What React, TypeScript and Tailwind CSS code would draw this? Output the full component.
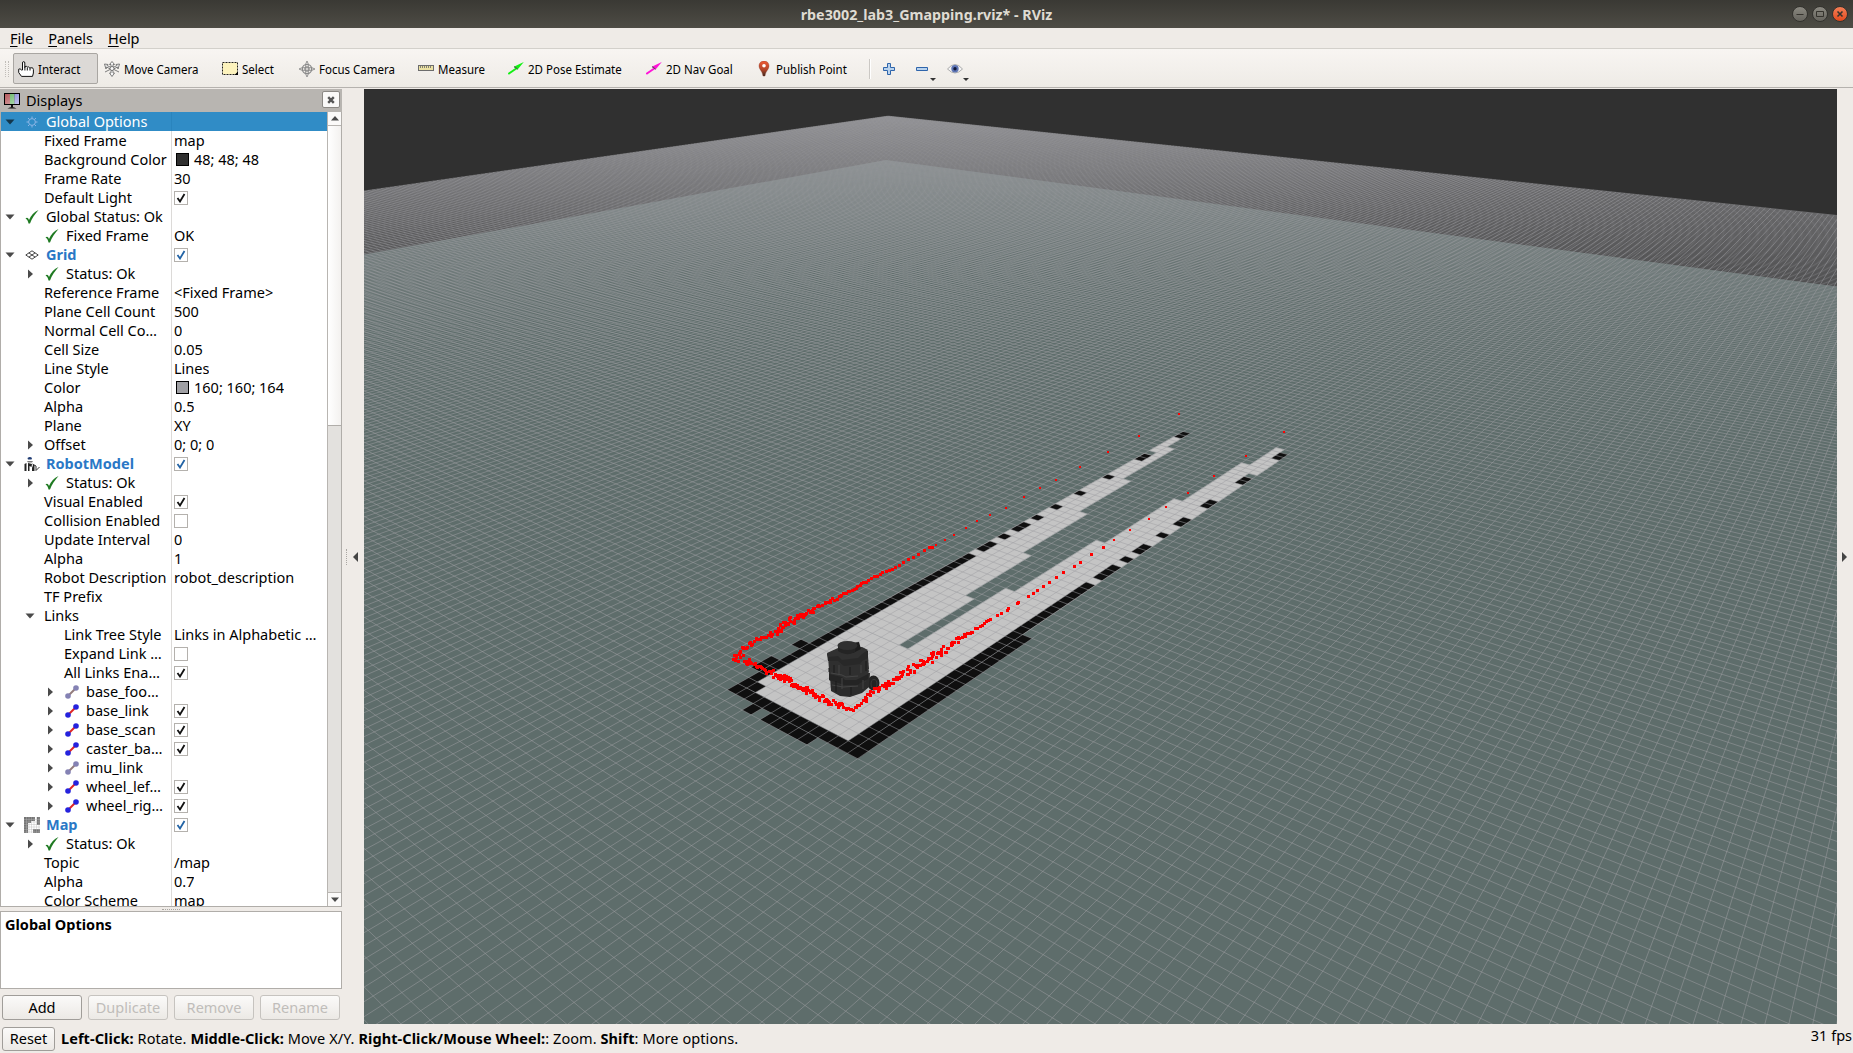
import React from "react";

/* ---------- 3D scene: ground plane projected through an orbit camera ---------- */

const FOCAL = 1128.6;
const CX = 1100.5;
const CY = 556.5;
const HORIZON = -46.67165;
const YAW = 0.62668;
const SCALE = 2.76114;
const OFF_U = 2.96538;
const OFF_V = 3.14757;
const FP = Math.hypot(FOCAL, CY - HORIZON);
const COS = Math.cos(YAW);
const SIN = Math.sin(YAW);
const NEAR = 2.6;

const depth = (u: number, v: number) => (u + OFF_U) * COS + (v + OFF_V) * SIN;

function project(u: number, v: number): [number, number] {
  const f = depth(u, v);
  const l = (u + OFF_U) * SIN - (v + OFF_V) * COS;
  return [CX + (l * FP) / f, HORIZON + (SCALE * FP) / f];
}

type P2 = [number, number];

function clipNear(poly: P2[]): P2[] {
  const out: P2[] = [];
  poly.forEach((a, i) => {
    const b = poly[(i + 1) % poly.length];
    const da = depth(a[0], a[1]) - NEAR;
    const db = depth(b[0], b[1]) - NEAR;
    if (da >= 0) out.push(a);
    if (da * db < 0) {
      const t = da / (da - db);
      out.push([a[0] + (b[0] - a[0]) * t, a[1] + (b[1] - a[1]) * t]);
    }
  });
  return out;
}

const pts = (poly: P2[]) =>
  clipNear(poly)
    .map(([u, v]) => project(u, v).map((n) => n.toFixed(2)).join(","))
    .join(" ");

/* rectangle given in 5 cm cell indices */
const cells = ([u0, u1, v0, v1]: number[]) =>
  pts([
    [u0 / 20, v0 / 20],
    [u1 / 20, v0 / 20],
    [u1 / 20, v1 / 20],
    [u0 / 20, v1 / 20],
  ]);

const FREE = [
  [3, 14, 4, 15],
  [14, 26, 3, 9],
  [26, 38, 3, 8],
  [38, 50, 3, 7],
  [50, 59, 3, 6],
  [59, 60, 4, 6],
  [60, 62, 3, 6],
  [62, 65, 3, 5],
  [65, 67, 4, 5],
  [67, 68, 4, 5],
  [14, 23, 10, 16],
  [23, 32, 11, 16],
  [32, 42, 12, 16],
  [42, 51, 13, 16],
  [51, 58, 14, 16],
  [58, 59, 14, 15],
  [59, 61, 14, 16],
  [61, 65, 15, 16],
];

const OCCUPIED = [
  [2, 21, 2, 3],
  [2, 31, 3, 4],
  [32, 35, 3, 4],
  [36, 37, 3, 4],
  [38, 40, 3, 4],
  [42, 43, 3, 4],
  [45, 47, 3, 4],
  [50, 52, 3, 4],
  [57, 59, 3, 4],
  [65, 67, 3, 4],
  [2, 3, 2, 16],
  [3, 4, 14, 16],
  [4, 29, 15, 16],
  [5, 7, 16, 17],
  [9, 10, 16, 17],
  [30, 32, 15, 16],
  [33, 34, 15, 16],
  [35, 37, 15, 16],
  [38, 39, 15, 16],
  [41, 42, 15, 16],
  [45, 46, 15, 16],
  [50, 51, 15, 16],
  [56, 58, 15, 16],
  [64, 66, 15, 16],
  [1, 2, 6, 11],
  [1, 2, 12, 13],
];

function gridLines() {
  const out: string[][] = [];
  const seg = (a: P2, b: P2) => {
    let [p, q] = [a, b];
    const dp = depth(...p) - NEAR;
    const dq = depth(...q) - NEAR;
    if (dp < 0 && dq < 0) return;
    if (dp * dq < 0) {
      const t = dp / (dp - dq);
      const m: P2 = [p[0] + (q[0] - p[0]) * t, p[1] + (q[1] - p[1]) * t];
      if (dp < 0) p = m;
      else q = m;
    }
    out.push([...project(...p), ...project(...q)].map((n) => n.toFixed(2)));
  };
  for (let i = 0; i <= 500; i++) {
    const c = -12.5 + i * 0.05;
    seg([c, -12.5], [c, 12.5]);
    seg([-12.5, c], [12.5, c]);
  }
  return out;
}

let seed = 7;
const rnd = () => {
  seed = (seed * 16807) % 2147483647;
  return seed / 2147483647;
};

/* dense parts of the laser scan: x, y, spread, spacing */
const SCAN_TRACK: number[][] = [
  [930, 548, 0.8, 6],
  [913, 557, 0.8, 5],
  [895, 567.5, 1, 3.6],
  [880, 574.5, 1.2, 3],
  [866, 582, 1.2, 2.4],
  [850, 591.5, 1.6, 2.2],
  [833, 600.5, 2, 1.8],
  [820, 606, 2.4, 1.5],
  [803, 614.5, 3.6, 0.9],
  [787, 624, 4, 0.9],
  [777, 631, 3, 1.4],
  [755, 641.5, 2.4, 1.7],
  [742, 650, 3.6, 1.3],
  [735, 656, 3.6, 1.1],
  [755, 665, 3.4, 1.3],
  [772, 673, 3.6, 1.1],
  [790, 681, 4, 0.9],
  [811, 692.5, 4, 0.9],
  [832, 703, 3.4, 1.5],
  [850, 709.5, 2.6, 1.7],
  [860, 704, 3, 1.6],
  [872, 693, 3.4, 1.4],
  [887, 686, 3, 1.4],
  [900, 676, 4, 1.2],
  [920, 665, 4.4, 1],
  [934, 656, 4, 1.1],
  [948, 647, 3, 1.5],
  [962, 637.5, 2.2, 2.2],
  [980, 627, 2, 2.6],
  [990, 618, 0.8, 3],
];

const SCAN_FAR: number[][] = [
  [1179, 414], [1139.3, 435.7], [1108, 452], [1080, 467.3], [1056.3, 480.3], [1040, 488.3],
  [1024, 496.7], [1006, 507.7], [990, 515], [977, 521], [966, 528], [954, 535],
  [945, 540], [936, 545], [932, 547], [1284, 431.7], [1246, 456], [1213.7, 476.3], [1188, 493],
  [1165.7, 507.3], [1148.7, 518.7], [1130.3, 530.3], [1114, 540], [1103, 547.3], [1091.7, 554.7],
  [1080, 562], [1074.3, 566.7], [1063.7, 572.7], [1056.7, 577.7], [1049.3, 582.3], [1043.7, 586.3],
  [1037, 590.3], [1033.7, 593], [1028, 596.7], [1018, 602], [1017, 603.5], [1008, 608], [1007.5, 610],
  [1001, 613.5], [997.5, 615.5], [990, 619],
];

function scanPoints() {
  const out: number[][] = [...SCAN_FAR];
  for (let i = 0; i + 1 < SCAN_TRACK.length; i++) {
    const [x0, y0, s, step] = SCAN_TRACK[i];
    const [x1, y1] = SCAN_TRACK[i + 1];
    const n = Math.max(1, Math.round(Math.hypot(x1 - x0, y1 - y0) / step));
    for (let k = 0; k < n; k++) {
      const t = k / n;
      const j = (rnd() + rnd() - 1) * s * 1.2;
      out.push([x0 + (x1 - x0) * t + (rnd() - 0.5) * s, y0 + (y1 - y0) * t + j]);
    }
  }
  return out;
}

const LINES = gridLines();
const SCAN = scanPoints();
const MAP_EXTENT: P2[] = [[-10, -10], [9.2, -10], [9.2, 9.2], [-10, 9.2]];

function Scene() {
  return (
    <svg viewBox="364 89 1473 935" className="block h-[935px] w-[1473px] shrink-0 bg-[#303030]">
      <polygon points={pts(MAP_EXTENT)} fill="#5e6d6b" />
      <g fill="#c4c4c4" stroke="#c4c4c4" strokeWidth="0.4">
        {FREE.map((c, i) => <polygon key={i} points={cells(c)} />)}
      </g>
      <g fill="#0f0f0f">
        {OCCUPIED.map((c, i) => <polygon key={i} points={cells(c)} />)}
      </g>
      <g stroke="#a0a0a4" strokeOpacity="0.5" strokeWidth="1">
        {LINES.map(([x1, y1, x2, y2], i) => <line key={i} x1={x1} y1={y1} x2={x2} y2={y2} />)}
      </g>
      <Robot />
      <g fill="#ff0000">
        {SCAN.map(([x, y], i) => {
          const s = y > 545 ? 3 : 2;
          return <rect key={i} x={Math.round(x - s / 2)} y={Math.round(y - s / 2)} width={s} height={s} />;
        })}
      </g>
    </svg>
  );
}

function Robot() {
  return (
    <g>
      <ellipse cx="873.5" cy="683" rx="6" ry="7.5" fill="#232323" />
      <ellipse cx="874" cy="684" rx="3" ry="4.5" fill="none" stroke="#3a3a3a" />
      <path d="M830 677 L836 673 L870 673 L869 687 L862 693 L850 697 L840 696 L831 691Z" fill="#2b2b2b" />
      <path d="M829 663 L866 663 L869 671 L866 682 L852 686 L840 685 L829 680Z" fill="#303030" />
      <path d="M829 674 L842 677 L845 680 L856 680 L868 674 L868 679 L857 685 L844 685 L829 680Z" fill="#242424" />
      <path d="M828 656 L868 656 L869 669 L862 674 L846 676 L829 670Z" fill="#2f2f2f" />
      <path d="M827 654 L835 650 L863 648 L868 651 L868 658 L862 661 L860 664 L844 666 L838 661 L828 661Z" fill="#282828" />
      <path d="M827 653 L838 648 L862 647 L868 650 L862 654 L858 658 L842 660 L838 656 L828 657Z" fill="#313131" />
      <path d="M851 643 L859 642 L861 649 L853 653Z" fill="#1d1d1d" />
      <path d="M838 645 L838 651 Q846 657 855 652 L856 645Z" fill="#242424" />
      <ellipse cx="847.500" cy="645.500" rx="10" ry="4.500" fill="#303030" />
      <path d="M839 665 V675 M842 678 V689 M861 665 V673 M863 680 V689 M831 673 L842 675 L846 677 L858 676 M832 685 L843 687 L858 686" stroke="#454545" fill="none" />
      <path d="M829 668 V672 M834 665 V673 M850 667 V675 M851 687 V695 M836 681 V692 M866 661 V671" stroke="#1a1a1a" fill="none" />
    </g>
  );
}

/* ---------- small glyphs ---------- */

function TreeArrow({ open, dark }: { open: boolean; dark?: boolean }) {
  return (
    <svg className="h-3 w-3 shrink-0" viewBox="0 0 12 12">
      <path d={open ? "M1.500 3.500H10.500L6 8.500Z" : "M4 1.500V10.500L9 6Z"} fill={dark ? "#13364c" : "#4a4a4a"} />
    </svg>
  );
}

function GreenCheck() {
  return (
    <svg className="h-[14px] w-[14px]" viewBox="0 0 14 14">
      <path d="M0.500 8.500C2 7 3 7.500 4 10C6 5.500 9 2 13.500 0C10 4 6.500 9 5 13.500H3.500C3 11 2 9 0.500 8.500Z" fill="#1f7a22" />
    </svg>
  );
}

function GearIcon() {
  return (
    <svg className="h-3 w-3" viewBox="0 0 12 12" fill="none" stroke="#8db6e6">
      <circle cx="6" cy="6" r="3.400" />
      <path d="M6 0.500V2.500M6 9.500V11.500M0.500 6H2.500M9.500 6H11.500M2 2L3.500 3.500M8.500 8.500L10 10M2 10L3.500 8.500M8.500 3.500L10 2" />
    </svg>
  );
}

function GridIcon() {
  return (
    <svg className="h-[10px] w-[14px]" viewBox="0 0 14 10" fill="none" stroke="#444" strokeWidth="1">
      <path d="M7 0.800L13.200 5L7 9.200L0.800 5ZM3.900 2.900L10.100 7.100M10.100 2.900L3.900 7.100" />
    </svg>
  );
}

function RobotIcon() {
  return (
    <svg className="h-4 w-4" viewBox="0 0 16 16">
      <path d="M3.500 2Q6 0 8 2L7.500 3.500H4Z" fill="#1f3b73" />
      <path d="M3 5H9L8 6.500H4Z" fill="#777" />
      <path d="M0.500 8L2.500 7V15H0.500ZM4 7L8 8L7.500 11L5.500 10V15H4ZM9 9L10.500 9V15H8V12Z" fill="#222" />
      <path d="M8.500 8L12 10V14.500L15.500 11" fill="none" stroke="#333" />
    </svg>
  );
}

function MapIcon() {
  return (
    <svg className="h-4 w-4" viewBox="0 0 16 16">
      <path d="M0 0H11V4H7V6H4V16H0ZM13 0H16V8H13ZM9 12H16V16H9Z" fill="#747474" />
      <path d="M2.500 0V16M5 0V16M7.500 0V16M10 0V16M12.500 0V16M15 0V16M0 2.500H16M0 5H16M0 7.500H16M0 10H16M0 12.500H16M0 15H16" stroke="#b5b5b5" strokeWidth="0.400" />
    </svg>
  );
}

function LinkIcon({ faded }: { faded?: boolean }) {
  const ball = faded ? "#8482b4" : "#2522dd";
  return (
    <svg className="h-[14px] w-[14px]" viewBox="0 0 14 14">
      <path d="M3 11L11 3" stroke={faded ? "#937c7c" : "#df2626"} strokeWidth="2" />
      <circle cx="3" cy="11" r="2.800" fill={ball} />
      <circle cx="11" cy="3" r="2.800" fill={ball} />
    </svg>
  );
}

function CheckBox({ on, blue }: { on: boolean; blue?: boolean }) {
  return (
    <span className="flex h-[14px] w-[14px] items-center justify-center border border-[#b4b1ad] bg-white">
      {on && (
        <svg className="h-[10px] w-[10px]" viewBox="0 0 10 10">
          <path d="M1.500 5L4 8.500L8.500 1" fill="none" stroke={blue ? "#2263a5" : "#111"} strokeWidth="1.800" />
        </svg>
      )}
    </span>
  );
}

/* ---------- display tree ---------- */

type Icon = "gear" | "ok" | "grid" | "robot" | "map" | "link" | "linkOff";
type Value = string | { swatch: string; text: string } | { check: boolean; blue?: boolean };
type Row = { d: number; label: string; v?: Value; arrow?: "open" | "closed"; icon?: Icon; bold?: boolean; selected?: boolean };

const on = { check: true };
const off = { check: false };
const blue = { check: true, blue: true };

const ROWS: Row[] = [
  { d: 0, label: "Global Options", arrow: "open", icon: "gear", selected: true },
  { d: 1, label: "Fixed Frame", v: "map" },
  { d: 1, label: "Background Color", v: { swatch: "#303030", text: "48; 48; 48" } },
  { d: 1, label: "Frame Rate", v: "30" },
  { d: 1, label: "Default Light", v: on },
  { d: 0, label: "Global Status: Ok", arrow: "open", icon: "ok" },
  { d: 1, label: "Fixed Frame", icon: "ok", v: "OK" },
  { d: 0, label: "Grid", arrow: "open", icon: "grid", bold: true, v: blue },
  { d: 1, label: "Status: Ok", arrow: "closed", icon: "ok" },
  { d: 1, label: "Reference Frame", v: "<Fixed Frame>" },
  { d: 1, label: "Plane Cell Count", v: "500" },
  { d: 1, label: "Normal Cell Co…", v: "0" },
  { d: 1, label: "Cell Size", v: "0.05" },
  { d: 1, label: "Line Style", v: "Lines" },
  { d: 1, label: "Color", v: { swatch: "#a0a0a4", text: "160; 160; 164" } },
  { d: 1, label: "Alpha", v: "0.5" },
  { d: 1, label: "Plane", v: "XY" },
  { d: 1, label: "Offset", arrow: "closed", v: "0; 0; 0" },
  { d: 0, label: "RobotModel", arrow: "open", icon: "robot", bold: true, v: blue },
  { d: 1, label: "Status: Ok", arrow: "closed", icon: "ok" },
  { d: 1, label: "Visual Enabled", v: on },
  { d: 1, label: "Collision Enabled", v: off },
  { d: 1, label: "Update Interval", v: "0" },
  { d: 1, label: "Alpha", v: "1" },
  { d: 1, label: "Robot Description", v: "robot_description" },
  { d: 1, label: "TF Prefix" },
  { d: 1, label: "Links", arrow: "open" },
  { d: 2, label: "Link Tree Style", v: "Links in Alphabetic …" },
  { d: 2, label: "Expand Link …", v: off },
  { d: 2, label: "All Links Ena…", v: on },
  { d: 2, label: "base_foo…", arrow: "closed", icon: "linkOff" },
  { d: 2, label: "base_link", arrow: "closed", icon: "link", v: on },
  { d: 2, label: "base_scan", arrow: "closed", icon: "link", v: on },
  { d: 2, label: "caster_ba…", arrow: "closed", icon: "link", v: on },
  { d: 2, label: "imu_link", arrow: "closed", icon: "linkOff" },
  { d: 2, label: "wheel_lef…", arrow: "closed", icon: "link", v: on },
  { d: 2, label: "wheel_rig…", arrow: "closed", icon: "link", v: on },
  { d: 0, label: "Map", arrow: "open", icon: "map", bold: true, v: blue },
  { d: 1, label: "Status: Ok", arrow: "closed", icon: "ok" },
  { d: 1, label: "Topic", v: "/map" },
  { d: 1, label: "Alpha", v: "0.7" },
  { d: 1, label: "Color Scheme", v: "map" },
];

const INDENT = ["pl-[3px]", "pl-[23px]", "pl-[43px]"];

function RowIcon({ icon }: { icon: Icon }) {
  if (icon === "gear") return <GearIcon />;
  if (icon === "ok") return <GreenCheck />;
  if (icon === "grid") return <GridIcon />;
  if (icon === "robot") return <RobotIcon />;
  if (icon === "map") return <MapIcon />;
  return <LinkIcon faded={icon === "linkOff"} />;
}

function ValueCell({ v }: { v: Value }) {
  if (typeof v === "string") return <span>{v}</span>;
  if ("swatch" in v)
    return (
      <span className="flex items-center gap-[5px] pl-[2px]">
        <svg className="h-[13px] w-[13px]" viewBox="0 0 13 13">
          <rect x="0.500" y="0.500" width="12" height="12" fill={v.swatch} stroke="#000" />
        </svg>
        {v.text}
      </span>
    );
  return <CheckBox on={v.check} blue={v.blue} />;
}

function TreeRow({ row }: { row: Row }) {
  return (
    <div className={row.selected ? "flex h-[19px] shrink-0 bg-[#308cc6] text-white" : "flex h-[19px] shrink-0"}>
      <div className={`flex w-[171px] shrink-0 items-center overflow-hidden whitespace-nowrap border-r ${row.selected ? "border-[#2a84bd]" : "border-[#dcdad8]"} ${INDENT[row.d]}`}>
        <span className="flex w-5 shrink-0 items-center">{row.arrow && <TreeArrow open={row.arrow === "open"} dark={row.selected} />}</span>
        {row.icon && (
          <span className="flex w-[22px] shrink-0 items-center justify-start">
            <span className="flex w-4 justify-center">
              <RowIcon icon={row.icon} />
            </span>
          </span>
        )}
        <span className={row.bold ? "font-bold text-[#2a78c6]" : ""}>{row.label}</span>
      </div>
      <div className="flex items-center overflow-hidden whitespace-nowrap pl-[2px]">{row.v !== undefined && <ValueCell v={row.v} />}</div>
    </div>
  );
}

function ScrollButton({ up }: { up?: boolean }) {
  return (
    <div className={`flex h-[14px] shrink-0 items-center justify-center bg-[#fbfaf9] ${up ? "border-b" : "border-t"} border-[#b8b5b1]`}>
      <svg className="h-[5px] w-2" viewBox="0 0 8 5">
        <path d={up ? "M0 4.500H8L4 0Z" : "M0 0.500H8L4 5Z"} fill="#4a4a4a" />
      </svg>
    </div>
  );
}

function DisplaysPanel() {
  return (
    <div className="flex w-[342px] shrink-0 flex-col">
      <div className="flex h-[23px] items-center bg-[#b8b5b1] pl-1 pr-[2px]">
        <svg className="h-4 w-4" viewBox="0 0 16 16">
          <defs>
            <linearGradient id="glare" x1="0" y1="0" x2="1" y2="1">
              <stop offset="0" stopColor="#fff" stopOpacity="0" />
              <stop offset="1" stopColor="#fff" stopOpacity="0.5" />
            </linearGradient>
          </defs>
          <rect x="0" y="0" width="16" height="12" fill="#000" />
          <rect x="1" y="1" width="5" height="10" fill="#b5595c" />
          <rect x="6" y="1" width="4.500" height="10" fill="#68b868" />
          <rect x="10.500" y="1" width="4.500" height="10" fill="#8284d8" />
          <rect x="1" y="1" width="14" height="10" fill="url(#glare)" />
          <path d="M7 12H9V14H7ZM3.500 15.500Q8 12.500 12.500 15.500Z" fill="#111" />
        </svg>
        <span className="pl-[6px] text-[14.5px]">Displays</span>
        <span className="ml-auto mb-[2px] flex h-[17px] w-[18px] items-center justify-center rounded-[2px] border border-[#8b8884] bg-[#faf9f8]">
          <svg className="h-2 w-2" viewBox="0 0 8 8">
            <path d="M1.200 1.200L6.800 6.800M6.800 1.200L1.200 6.800" stroke="#555" strokeWidth="2.400" />
          </svg>
        </span>
      </div>
      <div className="flex h-[795px] border-x border-b border-[#b0ada9] bg-white">
        <div className="flex flex-1 flex-col overflow-hidden">
          {ROWS.map((r, i) => <TreeRow key={i} row={r} />)}
        </div>
        <div className="flex w-[14px] shrink-0 flex-col border-l border-[#b8b5b1] bg-[#e3e1de]">
          <ScrollButton up />
          <div className="h-[300px] border-b border-[#b0ada9] bg-gradient-to-r from-white to-[#f3f1ef]" />
          <div className="mt-auto">
            <ScrollButton />
          </div>
        </div>
      </div>
      <div className="flex h-1 items-center justify-center">
        <div className="w-[18px] border-t border-dotted border-[#aaa7a3]" />
      </div>
      <div className="h-[78px] border border-[#b0ada9] bg-white px-1 pt-[3px] font-bold">Global Options</div>
      <div className="flex gap-[6px] px-[2px] pt-[6px]">
        <PushButton label="Add" />
        <PushButton label="Duplicate" disabled />
        <PushButton label="Remove" disabled />
        <PushButton label="Rename" disabled />
      </div>
    </div>
  );
}

function PushButton({ label, disabled }: { label: string; disabled?: boolean }) {
  return (
    <div className={`flex h-[25px] w-20 items-center justify-center rounded-[3px] border bg-gradient-to-b from-[#fbfaf9] to-[#ece9e5] ${disabled ? "border-[#c6c3bf] text-[#c0bdba]" : "border-[#a09d99]"}`}>
      {label}
    </div>
  );
}

/* ---------- toolbar ---------- */

const ICONS: Record<string, React.ReactNode> = {
  hand: <path d="M4.500 9V2Q4.500 0.600 5.700 0.600Q6.800 0.600 6.800 2V6.500L7 5.500Q8.500 4.800 9.200 6L9.500 6Q11 5.500 11.700 6.800L12.200 6.800Q15.400 6 15.400 8.500V12L14.500 15.400H3.500L0.700 11.500V8.200Q2 7 3.500 9ZM9.300 6.500V9.500M12 7V9.500M6.900 6V9.500" fill="#fff" stroke="#111" />,
  move: (
    <g fill="#fafafa" stroke="#6e6e6e" strokeWidth="0.900">
      <path d="M8 0.500L10.500 3.500H9V6H7V3.500H5.500Z" />
      <path d="M8 15.500L10.500 12H9V9.500H7V12H5.500Z" />
      <path d="M0.500 3L4 3.500L3 4.500L7 6.500L6.500 8L2.500 6L2 8Z" />
      <path d="M15.500 3L12 3.500L13 4.500L9 6.500L9.500 8L13.500 6L14 8Z" />
      <circle cx="8" cy="7.500" r="2" />
      <path d="M1 11L6 8.500M15 11L10 8.500" />
    </g>
  ),
  select: (
    <g>
      <rect x="0.500" y="1.500" width="15" height="12" fill="#fdf3bd" stroke="#222" strokeDasharray="2 1" />
      <path d="M16 10.500V14H12.500Z" fill="#000" />
    </g>
  ),
  focus: (
    <g fill="none" stroke="#8b8b8b">
      <circle cx="8" cy="8" r="4.700" strokeWidth="1.300" />
      <circle cx="8" cy="8" r="2.300" />
      <path d="M8 0L9.300 3V13L8 16L6.700 13V3ZM0 8L3 6.700H13L16 8L13 9.300H3Z" strokeWidth="0.900" />
    </g>
  ),
  ruler: (
    <g>
      <rect x="0.500" y="4.500" width="15" height="5" fill="#ebe1a2" stroke="#6d6d6d" />
      <path d="M2.500 5V7M4.500 5V7M6.500 5V7M8.500 5V7M10.500 5V7M12.500 5V7" stroke="#666" strokeWidth="0.800" />
    </g>
  ),
  pose: <Arrow color="#13f013" />,
  goal: <Arrow color="#ff12d8" />,
  pin: (
    <g>
      <path d="M8 0C4.800 0 3 2.200 3 5C3 8.500 6.500 10 7 15H9C9.500 10 13 8.500 13 5C13 2.200 11.200 0 8 0Z" fill="url(#pin)" stroke="#8c3b2a" strokeWidth="0.400" />
      <circle cx="8" cy="4.800" r="1.800" fill="#fff" />
    </g>
  ),
  plus: <path d="M6.500 2.500H9.500V6.500H13.500V9.500H9.500V13.500H6.500V9.500H2.500V6.500H6.500Z" fill="#b9d3ee" stroke="#2f65ab" />,
  minus: <path d="M2.500 6.500H13.500V9.500H2.500Z" fill="#b9d3ee" stroke="#2f65ab" />,
  eye: (
    <g>
      <path d="M0.500 8Q8 -1 15.500 8Q8 16 0.500 8Z" fill="#f4f4f4" stroke="#aaa" />
      <circle cx="8" cy="7.800" r="3.700" fill="#5d74b4" />
      <circle cx="8" cy="7.800" r="1.700" fill="#10183a" />
    </g>
  ),
};

function Arrow({ color }: { color: string }) {
  return (
    <g>
      <path d="M0.300 13L9 7" stroke={color} strokeWidth="1.900" />
      <path d="M15.800 1L5.800 5.700L9.600 8.400Z" fill={color} />
      <path d="M6 5.700L9.500 8.300L8 6.500Z" fill="#333" stroke="#555" strokeWidth="0.600" />
    </g>
  );
}

function ToolIcon({ name }: { name: string }) {
  return (
    <svg className="h-4 w-4 shrink-0" viewBox="0 0 16 16">
      {name === "pin" && (
        <defs>
          <linearGradient id="pin" x1="0" y1="0" x2="0" y2="1">
            <stop offset="0" stopColor="#ef5a34" />
            <stop offset="0.600" stopColor="#b04428" />
            <stop offset="1" stopColor="#3a2a20" />
          </linearGradient>
        </defs>
      )}
      {ICONS[name]}
    </svg>
  );
}

function Tool({ icon, label, width, active }: { icon: string; label: string; width: string; active?: boolean }) {
  return (
    <div className={`flex h-[31px] shrink-0 items-center gap-1 rounded-[2px] border pl-1 ${width} ${active ? "border-[#a9a6a2] bg-[#dcd9d6]" : "border-transparent"}`}>
      <ToolIcon name={icon} />
      <span className="origin-left scale-x-[0.885] whitespace-nowrap pt-px text-[13px]">{label}</span>
    </div>
  );
}

function MiniTool({ icon, menu }: { icon: string; menu?: boolean }) {
  return (
    <div className="relative flex w-[33px] items-center justify-center">
      <ToolIcon name={icon} />
      {menu && (
        <svg className="absolute -bottom-[4px] right-[2px] h-[3px] w-[6px]" viewBox="0 0 6 3">
          <path d="M0 0H6L3 3Z" fill="#333" />
        </svg>
      )}
    </div>
  );
}

function Toolbar() {
  return (
    <div className="flex h-[39px] shrink-0 items-center border-b border-[#b5b2ae] bg-gradient-to-b from-[#f8f5f2] to-[#eeebe6] pt-px pl-[5px]">
      <div className="mr-1 h-4 w-1 border-x border-dotted border-[#c0bdb8]" />
      <Tool icon="hand" label="Interact" width="w-[85px]" active />
      <div className="w-[1px]" />
      <Tool icon="move" label="Move Camera" width="w-[118px]" />
      <Tool icon="select" label="Select" width="w-[77px]" />
      <Tool icon="focus" label="Focus Camera" width="w-[119px]" />
      <Tool icon="ruler" label="Measure" width="w-[90px]" />
      <Tool icon="pose" label="2D Pose Estimate" width="w-[138px]" />
      <Tool icon="goal" label="2D Nav Goal" width="w-[110px]" />
      <Tool icon="pin" label="Publish Point" width="w-[118px]" />
      <div className="mr-px h-5 w-[2px] border-l border-r border-l-[#cbc8c4] border-r-white" />
      <MiniTool icon="plus" />
      <MiniTool icon="minus" menu />
      <MiniTool icon="eye" menu />
    </div>
  );
}

/* ---------- window ---------- */

function TitleBar() {
  return (
    <div className="flex h-7 shrink-0 items-center bg-gradient-to-b from-[#3a3934] to-[#4e4c45]">
      <div className="w-[60px]" />
      <div className="flex-1 pl-[6px] text-center text-[14.3px] font-bold text-[#dfdbd2]">rbe3002_lab3_Gmapping.rviz* - RViz</div>
      <div className="flex w-[66px] gap-1 pl-[5px]">
        {["M4.500 8.500H11.500", "M4.500 5.500H11.500V10.500H4.500Z", "M5.500 5.500L10.500 10.500M10.500 5.500L5.500 10.500"].map((d, i) => (
          <span key={i} className={`flex h-4 w-4 items-center justify-center rounded-full border border-[#33322e] ${i === 2 ? "bg-gradient-to-b from-[#f37e55] to-[#e3481a]" : "bg-gradient-to-b from-[#8b8981] to-[#66645d]"}`}>
            <svg className="h-4 w-4 shrink-0" viewBox="0 0 16 16">
              <path d={d} fill="none" stroke="#35332d" strokeWidth={i === 2 ? 1.6 : 1} />
            </svg>
          </span>
        ))}
      </div>
    </div>
  );
}

function MenuBar() {
  return (
    <div className="flex h-[21px] shrink-0 items-center gap-[15px] border-b border-[#d3d0cb] pl-[10px] text-[14.5px]">
      {["File", "Panels", "Help"].map((m) => (
        <span key={m}>
          <span className="underline decoration-1 underline-offset-2">{m[0]}</span>
          {m.slice(1)}
        </span>
      ))}
    </div>
  );
}

export default function App() {
  return (
    <div className="flex h-[1053px] w-[1853px] flex-col overflow-hidden bg-[#efebe7] font-['Noto_Sans',sans-serif] text-[14.5px] leading-[19px] text-black">
      <TitleBar />
      <MenuBar />
      <Toolbar />
      <div className="mt-[1px] flex h-[935px] shrink-0">
        <DisplaysPanel />
        <div className="flex w-[22px] shrink-0 items-center justify-center gap-[6px] pr-[2px]">
          <div className="h-4 w-0 border-l border-dotted border-[#aaa7a3]" />
          <svg className="h-[10px] w-[5px]" viewBox="0 0 5 10"><path d="M5 0V10L0 5Z" fill="#444" /></svg>
        </div>
        <Scene />
        <div className="flex w-4 shrink-0 items-center justify-center pr-px">
          <svg className="h-[10px] w-[5px]" viewBox="0 0 5 10"><path d="M0 0V10L5 5Z" fill="#444" /></svg>
        </div>
      </div>
      <div className="flex flex-1 items-center pl-[2px]">
        <div className="flex h-6 w-[53px] items-center justify-center rounded-[3px] border border-[#a09d99] bg-gradient-to-b from-[#fbfaf9] to-[#ece9e5]">Reset</div>
        <div className="whitespace-nowrap pl-[6px] tracking-[0.08px]">
          <b>Left-Click:</b> Rotate. <b>Middle-Click:</b> Move X/Y. <b>Right-Click/Mouse Wheel:</b>: Zoom. <b>Shift</b>: More options.
        </div>
        <div className="ml-auto self-start pt-[2px] pr-[1px]">31 fps</div>
      </div>
    </div>
  );
}
